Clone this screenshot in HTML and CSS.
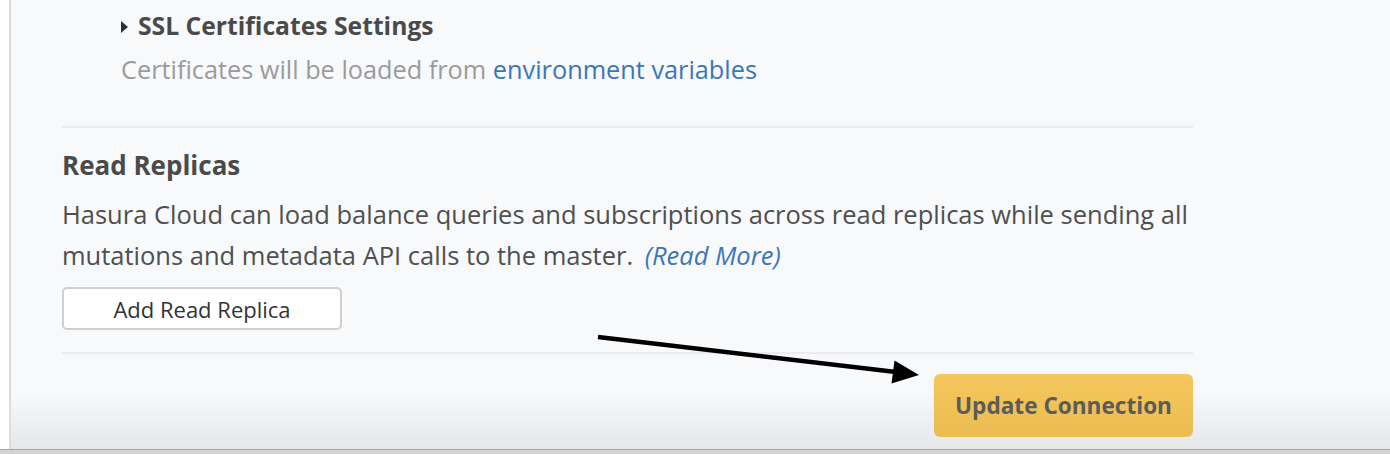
FILE: index.html
```
<!DOCTYPE html>
<html lang="en">
<head>
<meta charset="utf-8">
<title>Update Connection</title>
<link rel="stylesheet" href="styles.css">
</head>
<body>
<div class="page">
  <div class="frame">
    <div class="rail"></div>
    <main class="main">
      <div class="content">
        <section class="ssl">
          <div class="ssl-title"><span class="caret"></span>SSL Certificates Settings</div>
          <p class="ssl-note">Certificates will be loaded from <a href="#" class="link">environment variables</a></p>
        </section>
        <hr class="sep">
        <section class="replicas">
          <h3 class="replicas-title">Read Replicas</h3>
          <p class="replicas-text">Hasura Cloud can load balance queries and subscriptions across read replicas while sending all mutations and metadata API calls to the master. <a href="#" class="link more">(Read More)</a></p>
          <button class="btn-default" type="button">Add Read Replica</button>
        </section>
        <hr class="sep">
        <div class="actions">
          <button class="btn-primary" type="button">Update Connection</button>
        </div>
      </div>
    </main>
  </div>
  <div class="statusbar"></div>
  <svg class="arrow" width="1390" height="454" viewBox="0 0 1390 454" aria-hidden="true">
    <line x1="598" y1="337" x2="896" y2="372" stroke="#000" stroke-width="4.5" stroke-linecap="butt"/>
    <polygon points="919,375 894.5,360.5 891.5,383.5" fill="#000"/>
  </svg>
</div>
</body>
</html>
```
FILE: styles.css
```
* { box-sizing: border-box; }
html, body { margin: 0; padding: 0; }
body {
  font-family: "Open Sans", "Noto Sans", sans-serif;
  color: #4f4f4f;
  background: #f8f9fb;
}
.page {
  position: relative;
  width: 1390px;
  height: 454px;
  overflow: hidden;
  display: flex;
  flex-direction: column;
}
.frame {
  display: flex;
  height: 449px;
}
.rail {
  width: 11px;
  background: #ffffff;
  border-right: 2px solid #dcdcdc;
  flex: none;
}
.main {
  flex: 1;
  background: linear-gradient(to bottom, #f8f9fb 0, #f8f9fb 392px, #e6e7e9 449px);
}
.content {
  width: 1131px;
  margin-left: 51px;
}
.ssl {
  padding: 11px 0 0 59px;
}
.ssl-title {
  display: flex;
  align-items: center;
  font-size: 24.7px;
  line-height: 30px;
  font-weight: 700;
  color: #4a4a4a;
}
.caret {
  width: 0;
  height: 0;
  border-top: 6.5px solid transparent;
  border-bottom: 6.5px solid transparent;
  border-left: 7px solid #2f2f2f;
  margin: 1px 10px 0 0;
}
.ssl-note {
  margin: 13px 0 0 0;
  font-size: 25.3px;
  line-height: 30px;
  color: #9b9b9b;
}
.link {
  color: #3a77b8;
  text-decoration: none;
}
.sep {
  margin: 42px 0 0 0;
  border: 0;
  height: 2px;
  background: #eaecef;
}
.replicas {
  padding-top: 22px;
}
.replicas-title {
  margin: 0;
  font-size: 26px;
  line-height: 30px;
  font-weight: 700;
  color: #4a4a4a;
}
.replicas-text {
  margin: 14px 0 0 0;
  font-size: 25.5px;
  line-height: 41px;
  color: #4f4f4f;
}
.more {
  display: inline-block;
  font-style: italic;
  margin-left: 5px;
}
.btn-default {
  display: block;
  margin-top: 11px;
  width: 280px;
  height: 43px;
  padding: 0;
  background: #ffffff;
  border: 2px solid #cfcfcf;
  border-radius: 5px;
  font-family: inherit;
  font-size: 22px;
  color: #333333;
}
.replicas + .sep {
  margin-top: 22px;
}
.actions {
  display: flex;
  justify-content: flex-end;
  padding-top: 20px;
}
.btn-primary {
  width: 259px;
  height: 63px;
  padding: 0;
  border: 0;
  border-radius: 6px;
  background: linear-gradient(to bottom, #f4c75c, #ebbc51);
  font-family: inherit;
  font-size: 22.6px;
  font-weight: 700;
  color: #5b5b5b;
}
.statusbar {
  flex: 1;
  border-top: 1px solid #a8a8a8;
  background: #d2d2d2;
}
.arrow {
  position: absolute;
  left: 0;
  top: 0;
  pointer-events: none;
}
```
